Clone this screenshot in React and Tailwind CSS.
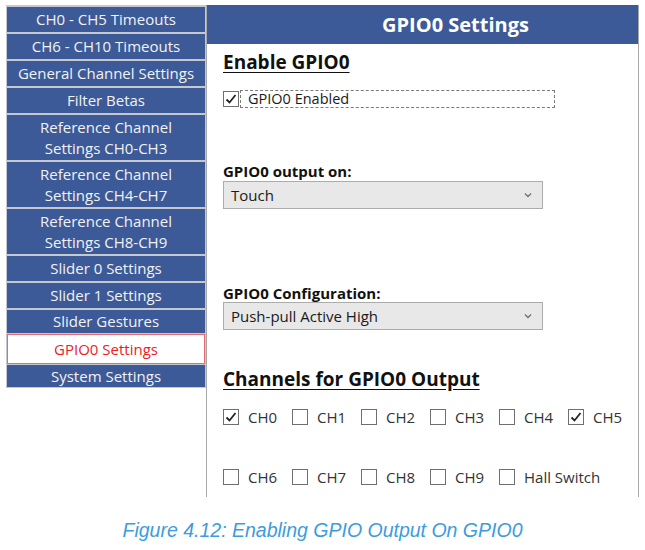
import React from "react";

const navItems = [
  { label: "CH0 - CH5 Timeouts", h: "h-[25px]" },
  { label: "CH6 - CH10 Timeouts", h: "h-[25px]" },
  { label: "General Channel Settings", h: "h-[25px]" },
  { label: "Filter Betas", h: "h-[25px]" },
  { label: "Reference Channel Settings CH0-CH3", h: "h-[45px]", lines: ["Reference Channel", "Settings CH0-CH3"] },
  { label: "Reference Channel Settings CH4-CH7", h: "h-[45px]", lines: ["Reference Channel", "Settings CH4-CH7"] },
  { label: "Reference Channel Settings CH8-CH9", h: "h-[45px]", lines: ["Reference Channel", "Settings CH8-CH9"] },
  { label: "Slider 0 Settings", h: "h-[25px]" },
  { label: "Slider 1 Settings", h: "h-[25px]" },
  { label: "Slider Gestures", h: "h-[23px]" },
  { label: "GPIO0 Settings", h: "h-[30px]", active: true },
  { label: "System Settings", h: "h-[22px]" },
];

const row1 = [
  { name: "CH0", checked: true },
  { name: "CH1" },
  { name: "CH2" },
  { name: "CH3" },
  { name: "CH4" },
  { name: "CH5", checked: true },
];

const row2 = [
  { name: "CH6" },
  { name: "CH7" },
  { name: "CH8" },
  { name: "CH9" },
  { name: "Hall Switch" },
];

const Checkbox = ({ checked }) => (
  <span className="w-[16px] h-[16px] border border-[#6f6f6f] bg-white flex items-center justify-center shrink-0">
    {checked && (
      <svg width="12" height="12" viewBox="0 0 12 12">
        <polyline points="1.5,6.5 4.5,9.5 10.5,2" fill="none" stroke="#222" strokeWidth="1.8" />
      </svg>
    )}
  </span>
);

const Dropdown = ({ value }) => (
  <div className="w-[320px] h-[28px] border border-[#acacac] bg-[#e8e8e8] flex items-center justify-between pl-[7px] pr-[10px] text-[15px] text-[#1a1a1a]">
    <span>{value}</span>
    <svg width="8" height="6" viewBox="0 0 8 6">
      <polyline points="1,1.5 4,4.5 7,1.5" fill="none" stroke="#707070" strokeWidth="1.3" />
    </svg>
  </div>
);

const App = () => {
  return (
    <div className="w-[645px] h-[550px] bg-white font-['Open_Sans',sans-serif] overflow-hidden">
      <div className="flex pt-[5px] pl-[6px]">
        <div className="w-[200px] self-start bg-[#c6c8cf] p-[1px] pt-[2px] flex flex-col gap-[2px]">
          {navItems.map((item) =>
            item.active ? (
              <div
                key={item.label}
                className={`${item.h} -my-[1px] bg-white border border-[#e86a6a] flex items-center justify-center text-[15px] text-[#ee1c24]`}
              >
                {item.label}
              </div>
            ) : (
              <div
                key={item.label}
                className={`${item.h} bg-[#3d5a98] flex flex-col items-center justify-center text-[15px] leading-[21px] text-[#f2f2f2]`}
              >
                {item.lines ? item.lines.map((l) => <span key={l}>{l}</span>) : item.label}
              </div>
            )
          )}
        </div>

        <div className="w-[433px] h-[492px] border-l border-r border-[#a8a8a8] flex flex-col overflow-hidden">
          <div className="h-[39px] shrink-0 bg-[#3d5a98] flex items-center justify-center pl-[66px] text-[20px] font-bold text-white">
            GPIO0 Settings
          </div>

          <div className="pl-[16px] flex flex-col shrink-0">
            <div className="mt-[6px] h-[24px] leading-[24px] text-[19px] font-bold underline underline-offset-[3px] text-[#111]">
              Enable GPIO0
            </div>

            <div className="mt-[16px] flex items-center h-[18px]">
              <Checkbox checked />
              <span className="ml-[1px] w-[315px] h-[18px] border border-dashed border-[#7a7a7a] flex items-center pl-[7px] text-[14.5px] text-[#1a1a1a]">
                GPIO0 Enabled
              </span>
            </div>

            <div className="mt-[54px] h-[18px] leading-[18px] text-[15px] font-bold text-[#111]">
              GPIO0 output on:
            </div>
            <div className="mt-[1px]">
              <Dropdown value="Touch" />
            </div>

            <div className="mt-[75px] h-[18px] leading-[18px] text-[15px] font-bold text-[#111]">
              GPIO0 Configuration:
            </div>
            <div>
              <Dropdown value="Push-pull Active High" />
            </div>

            <div className="mt-[37px] h-[24px] leading-[24px] text-[19px] font-bold underline underline-offset-[3px] text-[#111]">
              Channels for GPIO0 Output
            </div>

            <div className="mt-[15px] flex">
              {row1.map((c) => (
                <div key={c.name} className="w-[69px] flex items-center gap-[9px] text-[15px] text-[#333]">
                  <Checkbox checked={c.checked} />
                  <span>{c.name}</span>
                </div>
              ))}
            </div>

            <div className="mt-[37px] flex">
              {row2.map((c) => (
                <div key={c.name} className="w-[69px] flex items-center gap-[9px] text-[15px] text-[#333] whitespace-nowrap">
                  <Checkbox checked={c.checked} />
                  <span>{c.name}</span>
                </div>
              ))}
            </div>
          </div>
        </div>
      </div>

      <div className="mt-[19px] text-center text-[19.5px] italic text-[#3d9be0] font-['Liberation_Sans',sans-serif]">
        Figure 4.12: Enabling GPIO Output On GPIO0
      </div>
    </div>
  );
};

export default App;
